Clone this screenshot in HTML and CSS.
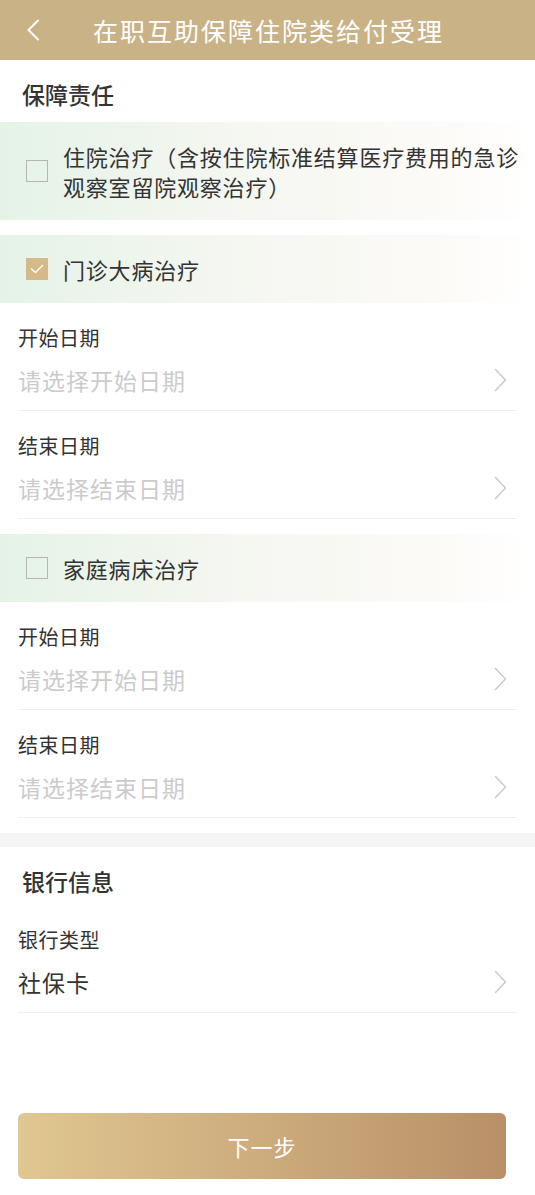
FILE: index.html
```html
<!DOCTYPE html>
<html lang="zh-CN">
<head>
  <meta charset="UTF-8" />
  <title>在职互助保障住院类给付受理</title>
  <link rel="stylesheet" href="styles.css">
</head>
<body>
  <header class="topbar">
    <svg class="back" width="12" height="22" viewBox="0 0 12 22">
      <polyline points="11,1.5 1.5,11 11,20.5" fill="none" stroke="#fff" stroke-width="2" stroke-linecap="round" stroke-linejoin="round"/>
    </svg>
    <h1>在职互助保障住院类给付受理</h1>
  </header>

  <section class="duty">
    <h2 class="section-title">保障责任</h2>

    <div class="group">
      <label class="band">
        <span class="check"></span>
        <span class="band-text">住院治疗（含按住院标准结算医疗费用的急诊观察室留院观察治疗）</span>
      </label>
    </div>

    <div class="group">
      <label class="band">
        <span class="check on">
          <svg width="14" height="10" viewBox="0 0 14 10"><polyline points="1.5,5 5.5,8.5 12.5,1.5" fill="none" stroke="#fff" stroke-width="1.4" stroke-linecap="round" stroke-linejoin="round"/></svg>
        </span>
        <span class="band-text">门诊大病治疗</span>
      </label>
      <div class="field">
        <div class="field-label">开始日期</div>
        <div class="field-value placeholder">请选择开始日期<svg class="arrow" width="13" height="24" viewBox="0 0 13 24"><polyline points="1.5,1.5 11.5,12 1.5,22.5" fill="none" stroke="#c8c8c8" stroke-width="1.4" stroke-linecap="round" stroke-linejoin="round"/></svg></div>
      </div>
      <div class="field">
        <div class="field-label">结束日期</div>
        <div class="field-value placeholder">请选择结束日期<svg class="arrow" width="13" height="24" viewBox="0 0 13 24"><polyline points="1.5,1.5 11.5,12 1.5,22.5" fill="none" stroke="#c8c8c8" stroke-width="1.4" stroke-linecap="round" stroke-linejoin="round"/></svg></div>
      </div>
    </div>

    <div class="group">
      <label class="band">
        <span class="check"></span>
        <span class="band-text">家庭病床治疗</span>
      </label>
      <div class="field">
        <div class="field-label">开始日期</div>
        <div class="field-value placeholder">请选择开始日期<svg class="arrow" width="13" height="24" viewBox="0 0 13 24"><polyline points="1.5,1.5 11.5,12 1.5,22.5" fill="none" stroke="#c8c8c8" stroke-width="1.4" stroke-linecap="round" stroke-linejoin="round"/></svg></div>
      </div>
      <div class="field">
        <div class="field-label">结束日期</div>
        <div class="field-value placeholder">请选择结束日期<svg class="arrow" width="13" height="24" viewBox="0 0 13 24"><polyline points="1.5,1.5 11.5,12 1.5,22.5" fill="none" stroke="#c8c8c8" stroke-width="1.4" stroke-linecap="round" stroke-linejoin="round"/></svg></div>
      </div>
    </div>
  </section>

  <div class="spacer"></div>

  <section class="bank">
    <h2 class="section-title">银行信息</h2>
    <div class="field">
      <div class="field-label">银行类型</div>
      <div class="field-value">社保卡<svg class="arrow" width="13" height="24" viewBox="0 0 13 24"><polyline points="1.5,1.5 11.5,12 1.5,22.5" fill="none" stroke="#c8c8c8" stroke-width="1.4" stroke-linecap="round" stroke-linejoin="round"/></svg></div>
    </div>
  </section>

  <div class="footer">
    <button type="button">下一步</button>
  </div>
</body>
</html>
```

FILE: styles.css
```css
* {
  box-sizing: border-box;
}
body {
  margin: 0;
  font-family: "Noto Sans CJK SC", "Noto Sans", sans-serif;
  color: #333;
  background: #fff;
}
.topbar {
  height: 60px;
  background: #c9b286;
  display: flex;
  align-items: center;
  padding-left: 27px;
}
.topbar .back {
  flex: none;
}
.topbar h1 {
  margin: 0 0 0 54px;
  font-size: 25px;
  font-weight: 400;
  letter-spacing: 2px;
  color: #fff;
  line-height: 30px;
}
.section-title {
  margin: 0;
  font-size: 23px;
  font-weight: 500;
  line-height: 30px;
  padding: 19px 22px 13px;
  color: #333;
}
.bank .section-title {
  padding-bottom: 9px;
}
.group {
  margin-bottom: 15px;
}
.band {
  display: flex;
  align-items: center;
  gap: 15px;
  padding: 19px 6px 19px 26px;
  background: linear-gradient(90deg, #e5f3e7 0%, #f5f7f1 45%, #fcfaf6 80%, #fff 100%);
}
.band-text {
  font-size: 22px;
  line-height: 30px;
  letter-spacing: 0.8px;
  color: #333;
}
.check {
  flex: none;
  width: 22px;
  height: 22px;
  border: 1.5px solid #b3b6b2;
  display: flex;
  align-items: center;
  justify-content: center;
}
.check.on {
  background: #d3ba88;
  border-color: #d3ba88;
}
.field {
  margin: 0 18px;
  padding: 21px 0 14px;
  border-bottom: 1px solid #efefef;
}
.field-label {
  font-size: 20px;
  line-height: 28px;
  letter-spacing: 0.5px;
  color: #333;
}
.field-value {
  margin-top: 12px;
  font-size: 23px;
  line-height: 32px;
  letter-spacing: 1px;
  color: #333;
  display: flex;
  align-items: center;
  justify-content: space-between;
}
.field-value.placeholder {
  color: #cbcbcb;
}
.arrow {
  flex: none;
  margin-right: 10px;
}
.spacer {
  height: 14px;
  background: #f5f5f5;
}
.footer {
  padding: 100px 29px 0 18px;
}
.footer button {
  width: 100%;
  height: 66px;
  border: none;
  border-radius: 6px;
  background: linear-gradient(90deg, #e0c791, #b99068);
  color: #fff;
  font-family: inherit;
  font-size: 22px;
  letter-spacing: 1px;
}
```
